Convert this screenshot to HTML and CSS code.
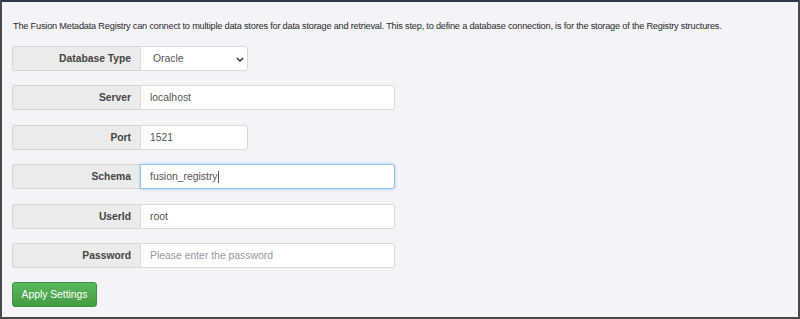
FILE: index.html
```html
<!DOCTYPE html>
<html>
<head>
<meta charset="utf-8">
<link rel="stylesheet" href="styles.css">
</head>
<body>
<div class="frame">
  <p class="intro">The Fusion Metadata Registry can connect to multiple data stores for data storage and retrieval. This step, to define a database connection, is for the storage of the Registry structures.</p>
  <div class="form">
    <div class="row">
      <span class="label">Database Type</span>
      <div class="control select short"><span>Oracle</span>
        <svg class="chev" width="8" height="5" viewBox="0 0 8 5"><path d="M1 1 L4 4 L7 1" fill="none" stroke="#333" stroke-width="1.5"/></svg>
      </div>
    </div>
    <div class="row">
      <span class="label">Server</span>
      <div class="control long"><span>localhost</span></div>
    </div>
    <div class="row">
      <span class="label">Port</span>
      <div class="control short"><span>1521</span></div>
    </div>
    <div class="row">
      <span class="label">Schema</span>
      <div class="control long focus"><span>fusion_registry</span><span class="caret"></span></div>
    </div>
    <div class="row">
      <span class="label">UserId</span>
      <div class="control long"><span>root</span></div>
    </div>
    <div class="row">
      <span class="label">Password</span>
      <div class="control long"><span class="ph">Please enter the password</span></div>
    </div>
    <button class="btn">Apply Settings</button>
  </div>
</div>
</body>
</html>
```
FILE: styles.css
```css
html, body { margin: 0; padding: 0; }
body { width: 800px; height: 319px; overflow: hidden; font-family: "Liberation Sans", Arial, sans-serif; }
.frame {
  box-sizing: border-box;
  width: 800px; height: 319px;
  background: #f3f3f8;
  border: 2px solid #4a4a4a;
  border-top-color: #2b3849;
  padding: 0 0 0 10px;
}
.intro {
  margin: 18px 0 0 1px;
  font-size: 9.2px;
  letter-spacing: -0.2px;
  color: #2a2a2a;
  line-height: 12px;
  white-space: nowrap;
}
.form { margin-top: 14px; display: flex; flex-direction: column; gap: 14.4px; }
.row { display: flex; height: 25px; }
.label {
  box-sizing: border-box;
  width: 128px;
  background: #ebebeb;
  border: 1px solid #d6d6d6;
  border-right: none;
  border-radius: 3px 0 0 3px;
  font-weight: bold;
  font-size: 10.3px;
  color: #444;
  display: flex; align-items: center; justify-content: flex-end;
  padding-right: 9px;
}
.control {
  box-sizing: border-box;
  background: #fff;
  border: 1px solid #d9d9d9;
  border-radius: 0 3px 3px 0;
  display: flex; align-items: center;
  padding-left: 9px;
  font-size: 10.4px;
  color: #555;
}
.short { width: 108px; }
.long { width: 255px; }
.select { justify-content: space-between; padding-left: 12px; padding-right: 3px; color: #555; }
.select .chev { margin-top: 1px; }
.focus { border-color: #8fc1ee; box-shadow: 0 0 3px rgba(102,175,233,0.6); }
.caret { display: inline-block; width: 1px; height: 12px; background: #555; margin-left: 0; }
.ph { color: #999; }
.btn {
  align-self: flex-start;
  box-sizing: border-box;
  height: 25px;
  width: 85px;
  border: 1px solid #3d9140;
  border-radius: 3px;
  background: linear-gradient(#5cb85c, #429c42);
  color: #fff;
  font-family: "Liberation Sans", Arial, sans-serif;
  font-size: 10.3px;
  padding: 0;
}
```
